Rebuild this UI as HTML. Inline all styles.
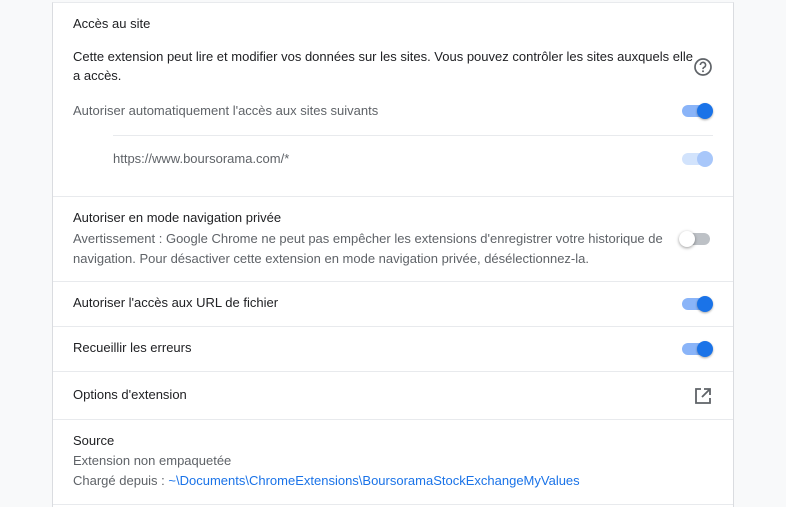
<!DOCTYPE html>
<html><head><meta charset="utf-8"><style>
*{margin:0;padding:0;box-sizing:border-box}
html,body{width:786px;height:507px;overflow:hidden}
body{background:#f8f9fa;font-family:"Liberation Sans",Arial,sans-serif;font-size:13px;color:#202124;position:relative}
.card{position:absolute;left:52px;top:2px;width:682px;height:505px;background:#fff;border-left:1px solid #dadce0;border-right:1px solid #dadce0;border-top:1px solid #e8eaed}
.t{position:absolute;left:73px;white-space:nowrap;line-height:20px}
.s{color:#5f6368}
.hr{position:absolute;height:1px;background:#e8eaed;left:53px;width:680px}
.tg{position:absolute;left:682px;width:28px;height:12px;border-radius:6px;background:#8ab4f8}
.tg i{position:absolute;top:-2px;left:15px;width:16px;height:16px;border-radius:50%;background:#1a73e8;box-shadow:0 1px 2px rgba(0,0,0,.35)}
.tg.d{background:#d2e3fc}.tg.d i{background:#a8c7fa;box-shadow:none}
.tg.off{background:#bdc1c6}.tg.off i{left:-3px;background:#fff;box-shadow:0 1px 3px rgba(0,0,0,.4)}
a{color:#1a73e8;text-decoration:none}
</style></head><body>
<div class="card"></div>
<div class="t" style="top:14px">Accès au site</div>
<div class="t" style="top:47px">Cette extension peut lire et modifier vos données sur les sites. Vous pouvez contrôler les sites auxquels elle</div>
<div class="t" style="top:66px">a accès.</div>
<svg style="position:absolute;left:693px;top:57px" width="20" height="20" viewBox="0 0 20 20"><circle cx="10" cy="10" r="8" fill="none" stroke="#5f6368" stroke-width="1.7"/><path d="M7.4 8a2.6 2.6 0 1 1 3.7 2.3c-.8.4-1.1.9-1.1 1.8" fill="none" stroke="#5f6368" stroke-width="1.6"/><circle cx="10" cy="14.2" r="1" fill="#5f6368"/></svg>
<div class="t s" style="top:101px">Autoriser automatiquement l'accès aux sites suivants</div>
<div class="tg" style="top:105px"><i></i></div>
<div class="hr" style="left:113px;width:600px;top:135px"></div>
<div class="t s" style="left:113px;top:149px">https://www.boursorama.com/*</div>
<div class="tg d" style="top:153px"><i></i></div>
<div class="hr" style="top:196px"></div>
<div class="t" style="top:208px">Autoriser en mode navigation privée</div>
<div class="t s" style="top:229px">Avertissement : Google Chrome ne peut pas empêcher les extensions d'enregistrer votre historique de</div>
<div class="t s" style="top:249px">navigation. Pour désactiver cette extension en mode navigation privée, désélectionnez-la.</div>
<div class="tg off" style="top:233px;left:682px;width:28px"><i></i></div>
<div class="hr" style="top:281px"></div>
<div class="t" style="top:293px">Autoriser l'accès aux URL de fichier</div>
<div class="tg" style="top:298px"><i></i></div>
<div class="hr" style="top:326px"></div>
<div class="t" style="top:338px">Recueillir les erreurs</div>
<div class="tg" style="top:343px"><i></i></div>
<div class="hr" style="top:371px"></div>
<div class="t" style="top:385px">Options d'extension</div>
<svg style="position:absolute;left:694px;top:387px" width="18" height="18" viewBox="0 0 18 18"><path d="M7 2H2v14h14v-5" fill="none" stroke="#5f6368" stroke-width="1.8"/><path d="M10 2h6v6M16 2L8 10" fill="none" stroke="#5f6368" stroke-width="1.8"/></svg>
<div class="hr" style="top:419px"></div>
<div class="t" style="top:431px">Source</div>
<div class="t s" style="top:451px">Extension non empaquetée</div>
<div class="t s" style="top:471px">Chargé depuis : <a>~\Documents\ChromeExtensions\BoursoramaStockExchangeMyValues</a></div>
<div class="hr" style="top:504px"></div>
</body></html>
